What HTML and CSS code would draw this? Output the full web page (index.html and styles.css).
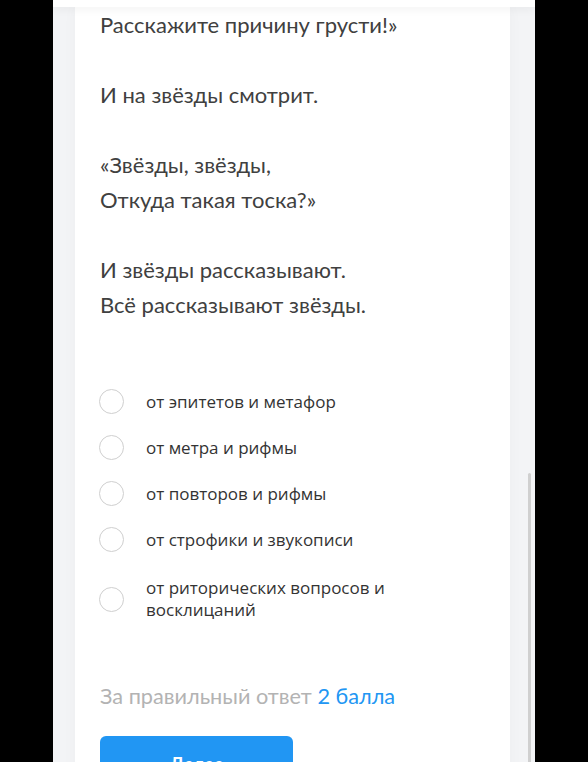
FILE: index.html
```html
<!DOCTYPE html>
<html lang="ru">
<head>
  <meta charset="UTF-8">
  <title>Тест</title>
  <link rel="stylesheet" href="styles.css">
</head>
<body>
  <div class="screen">
    <div class="topbar"></div>
    <div class="card">
      <div class="poem">
        <p>Расскажите причину грусти!»</p>
        <p>И на звёзды смотрит.</p>
        <p>«Звёзды, звёзды,<br>Откуда такая тоска?»</p>
        <p>И звёзды рассказывают.<br>Всё рассказывают звёзды.</p>
      </div>
      <ul class="options">
        <li><span class="radio"></span><span>от эпитетов и метафор</span></li>
        <li><span class="radio"></span><span>от метра и рифмы</span></li>
        <li><span class="radio"></span><span>от повторов и рифмы</span></li>
        <li><span class="radio"></span><span>от строфики и звукописи</span></li>
        <li class="wrap"><span class="radio"></span><span>от риторических вопросов и восклицаний</span></li>
      </ul>
      <div class="points">За правильный ответ <span>2 балла</span></div>
      <button class="next">Далее</button>
    </div>
    <div class="scrollbar"></div>
  </div>
</body>
</html>
```

FILE: styles.css
```css
html, body {
  margin: 0;
  height: 100%;
  overflow: hidden;
  background: #000;
}
.screen {
  position: relative;
  width: 482px;
  height: 762px;
  margin-left: 53px;
  background: #f3f4f6;
  overflow: hidden;
}
.topbar {
  height: 7px;
  background: #fff;
  box-shadow: 0 2px 10px rgba(0,0,0,0.06);
  position: relative;
  z-index: 1;
}
.card {
  margin: 0 25px 0 22px;
  padding: 0 25px;
  background: #fff;
  height: 800px;
  box-shadow: 0 0 14px rgba(0,0,0,0.03);
  font-family: Lato, "Open Sans", sans-serif;
  color: #404040;
}
.poem p {
  margin: 0 0 35px;
  font-size: 22px;
  line-height: 35px;
}
.poem p:last-child { margin-bottom: 0; }
.options {
  list-style: none;
  margin: 67px 0 0;
  padding: 0;
  font-family: "Open Sans", sans-serif;
}
.options li {
  display: flex;
  align-items: center;
  gap: 22px;
  margin-bottom: 21px;
  font-size: 17px;
  line-height: 22px;
  color: #333;
  padding-right: 40px;
}
.options li.wrap { padding-top: 4px; }
.radio {
  flex: none;
  box-sizing: border-box;
  width: 25px;
  height: 25px;
  margin-left: -1px;
  border: 1.5px solid #cfcfcf;
  border-radius: 50%;
}
.points {
  margin-top: 61px;
  font-size: 21.7px;
  line-height: 28px;
  color: #b3b3b3;
}
.points span { color: #2196f3; }
.next {
  display: block;
  width: 193px;
  height: 56px;
  margin-top: 26px;
  border: 0;
  border-radius: 6px;
  background: #2196f3;
  color: #fff;
  font-family: Lato, sans-serif;
  font-size: 18px;
  font-weight: bold;
}
.scrollbar {
  position: absolute;
  left: 475px;
  top: 473px;
  width: 3px;
  height: 300px;
  border-radius: 2px;
  background: #d0d0d0;
}
```
